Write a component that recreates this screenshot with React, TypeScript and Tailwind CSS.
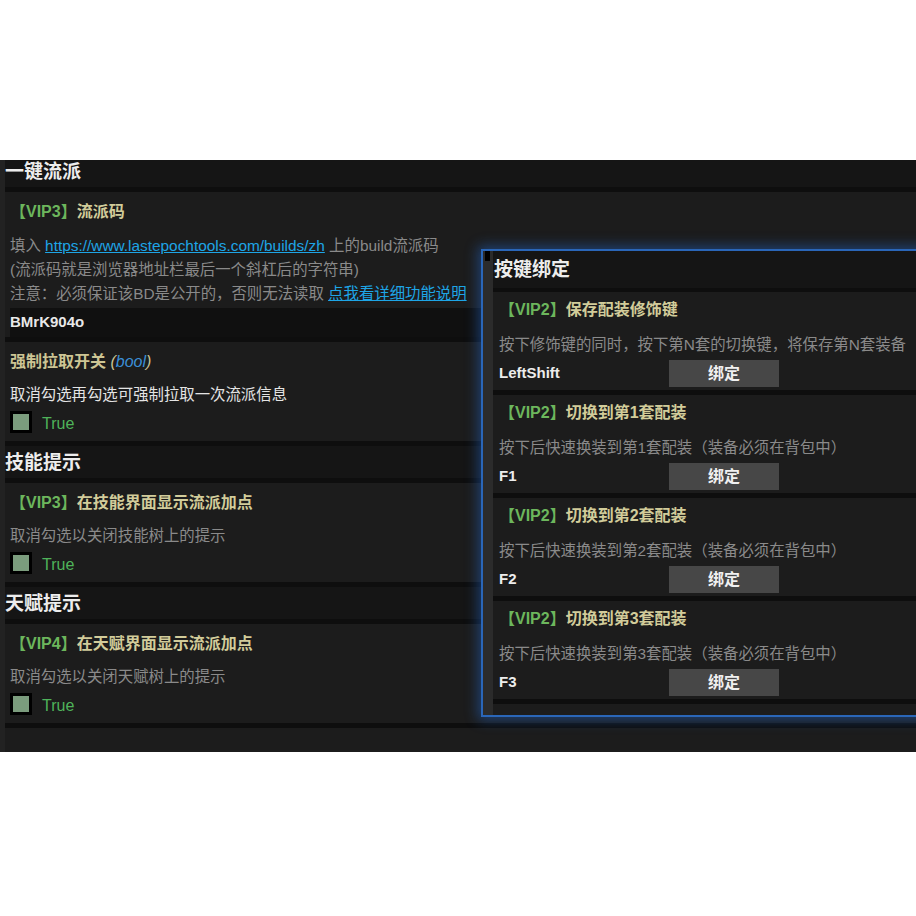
import React from "react";

const FONT = "font-['Liberation_Sans','Noto_Sans_CJK_SC',sans-serif]";

const Band = ({ h = "h-[5px]" }: { h?: string }) => <div className={`${h} bg-[#0e0e0e]`} />;

const SectionHeader = ({ title }: { title: string }) => (
  <div className="h-[32px] bg-[#151515] flex items-center">
    <span className="text-[19px] font-bold text-[#ededed] leading-none">{title}</span>
  </div>
);

const VipTitle = ({ vip, title }: { vip: string; title: string }) => (
  <div className="h-[24px] leading-[24px] text-[16px] font-bold whitespace-nowrap">
    <span className="text-[#6cb65c]">{vip}</span>
    <span className="text-[#d2cc9a]">{title}</span>
  </div>
);

const Checkbox = () => (
  <div className="mt-[4px] h-[22px] flex items-center gap-[10px]">
    <div className="w-[22px] h-[22px] border-[3px] border-black bg-[#7b9c7d]" />
    <span className="mt-[4px] text-[16px] text-[#4fb35a] leading-none">True</span>
  </div>
);

const ToggleCard = ({ vip, title, desc }: { vip: string; title: string; desc: string }) => (
  <div className="bg-[#1c1c1c] px-[5px] pt-[8px] pb-[8px]">
    <VipTitle vip={vip} title={title} />
    <div className="mt-[9px] h-[24px] leading-[24px] text-[15.4px] text-[#8a8a8a] whitespace-nowrap">{desc}</div>
    <Checkbox />
  </div>
);

const BuildCodeCard = () => (
  <div className="bg-[#1c1c1c] pl-[5px] pt-[8px]">
    <VipTitle vip="【VIP3】" title="流派码" />
    <div className="mt-[10px] text-[15.4px] leading-[24px] text-[#8a8a8a] whitespace-nowrap">
      <div>
        填入{" "}
        <span className="text-[#1ea5e6] underline">https://www.lastepochtools.com/builds/zh</span>{" "}
        上的build流派码
      </div>
      <div>(流派码就是浏览器地址栏最后一个斜杠后的字符串)</div>
      <div>
        注意：必须保证该BD是公开的，否则无法读取{" "}
        <span className="text-[#1ea5e6] underline">点我看详细功能说明</span>
      </div>
    </div>
    <div className="mt-[2px] h-[29px] bg-[#101010] flex items-center">
      <span className="text-[15px] font-bold text-[#e8e8e8]">BMrK904o</span>
    </div>
  </div>
);

const ForceCard = () => (
  <div className="bg-[#1c1c1c] px-[5px] pt-[8px] pb-[8px]">
    <div className="h-[24px] leading-[24px] text-[16px] whitespace-nowrap">
      <span className="font-bold text-[#cdc594]">强制拉取开关 </span>
      <span className="italic text-[#cdc594]">(</span>
      <span className="italic text-[#3b8fd6]">bool</span>
      <span className="italic text-[#cdc594]">)</span>
    </div>
    <div className="mt-[9px] h-[24px] leading-[24px] text-[15.4px] text-[#e4e4e4] whitespace-nowrap">
      取消勾选再勾选可强制拉取一次流派信息
    </div>
    <Checkbox />
  </div>
);

type Bind = { title: string; desc: string; key: string };

const binds: Bind[] = [
  { title: "保存配装修饰键", desc: "按下修饰键的同时，按下第N套的切换键，将保存第N套装备", key: "LeftShift" },
  { title: "切换到第1套配装", desc: "按下后快速换装到第1套配装（装备必须在背包中）", key: "F1" },
  { title: "切换到第2套配装", desc: "按下后快速换装到第2套配装（装备必须在背包中）", key: "F2" },
  { title: "切换到第3套配装", desc: "按下后快速换装到第3套配装（装备必须在背包中）", key: "F3" },
];

const BindCard = ({ b }: { b: Bind }) => (
  <div className="bg-[#1c1c1c] pl-[6px] pt-[6px] pb-[3px]">
    <VipTitle vip="【VIP2】" title={b.title} />
    <div className="mt-[11px] h-[24px] leading-[24px] text-[15.4px] text-[#8a8a8a] whitespace-nowrap">{b.desc}</div>
    <div className="mt-[3px] h-[27px] flex items-center">
      <span className="w-[170px] text-[15px] font-bold text-[#ececec]">{b.key}</span>
      <button className="w-[110px] h-[27px] bg-[#474747] text-[16px] font-bold text-[#f0f0f0]">绑定</button>
    </div>
  </div>
);

const KeyBindPanel = () => (
  <div className="absolute left-[481px] top-[89px] w-[445px] h-[468px] border-2 border-[#2a66b8] shadow-[0_0_12px_3px_rgba(35,110,220,0.45)] bg-[#1c1c1c] flex">
    <div className="w-[10px] bg-[#2b2b2b] shrink-0">
      <div className="ml-[2px] w-[5px] h-[10px] bg-black" />
    </div>
    <div className="flex-1 flex flex-col">
      <div className="h-[37px] bg-[#151515] flex items-center pl-[1px]">
        <span className="text-[19px] font-bold text-[#ededed] leading-none">按键绑定</span>
      </div>
      <Band h="h-[4px]" />
      {binds.map((b) => (
        <React.Fragment key={b.key}>
          <BindCard b={b} />
          <Band />
        </React.Fragment>
      ))}
      <div className="flex-1 bg-[#1c1c1c]" />
    </div>
  </div>
);

export default function App() {
  return (
    <div className={`${FONT} w-[916px] h-[916px] bg-white overflow-hidden`}>
      <div className="h-[160px]" />
      <div className="relative h-[592px] overflow-hidden bg-[#222222] pl-[5px]">
        <div className="-mt-[5px] flex flex-col">
          <SectionHeader title="一键流派" />
          <Band />
          <BuildCodeCard />
          <Band />
          <ForceCard />
          <Band />
          <SectionHeader title="技能提示" />
          <Band />
          <ToggleCard vip="【VIP3】" title="在技能界面显示流派加点" desc="取消勾选以关闭技能树上的提示" />
          <Band />
          <SectionHeader title="天赋提示" />
          <Band />
          <ToggleCard vip="【VIP4】" title="在天赋界面显示流派加点" desc="取消勾选以关闭天赋树上的提示" />
          <Band />
          <div className="h-[40px] bg-[#1c1c1c]" />
        </div>
        <KeyBindPanel />
      </div>
    </div>
  );
}
